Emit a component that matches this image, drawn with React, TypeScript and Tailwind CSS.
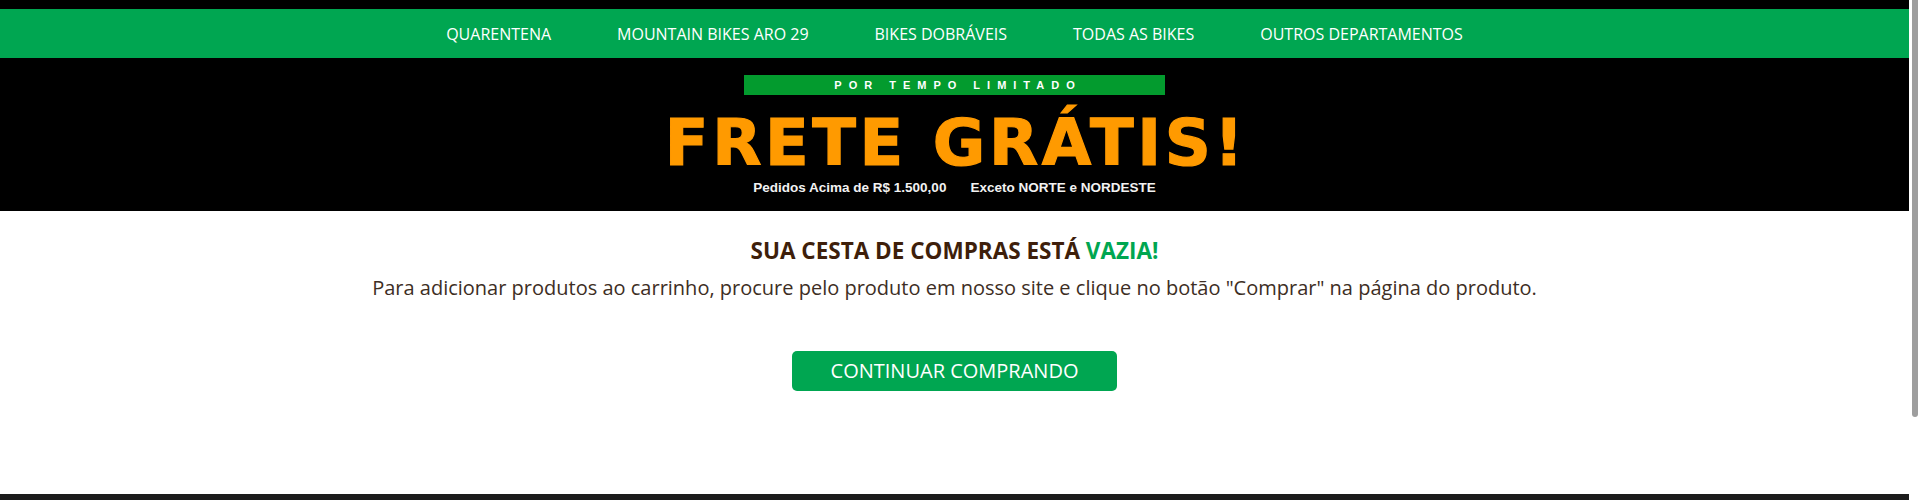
const navItems = [
  "Quarentena",
  "Mountain Bikes Aro 29",
  "Bikes Dobráveis",
  "Todas as Bikes",
  "Outros Departamentos",
];

function PromoBanner() {
  return (
    <section className="flex h-[153px] flex-col items-center bg-black">
      <div className="mt-[17px] flex h-[20px] w-[421px] items-center justify-center bg-[#039b2e]">
        <span className="pl-[7px] font-['Liberation_Sans',Arial,sans-serif] text-[11px] font-bold uppercase leading-none tracking-[7px] text-white">
          Por tempo limitado
        </span>
      </div>
      <h2 className="mt-[16px] pl-[3px] font-['DejaVu_Sans',sans-serif] text-[64px] font-bold uppercase leading-[64px] tracking-[3.6px] text-[#ff9a00] [-webkit-text-stroke:1.2px_#ff9a00]">
        Frete Grátis!
      </h2>
      <div className="mt-[5px] flex gap-[24px] font-['Liberation_Sans',Arial,sans-serif] text-[13.5px] font-bold leading-[16px] text-[#f2f2f2]">
        <span>Pedidos Acima de R$ 1.500,00</span>
        <span>Exceto NORTE e NORDESTE</span>
      </div>
    </section>
  );
}

export default function App() {
  return (
    <div className="flex h-[500px] w-full overflow-hidden bg-white font-['Open_Sans',sans-serif]">
      <div className="flex min-w-0 flex-1 flex-col">
        <div className="h-[9px] bg-black" />

        <nav className="flex h-[49px] items-center justify-center bg-[#00a651]">
          {navItems.map((item) => (
            <a
              key={item}
              href="#"
              className="px-[33px] text-[16px] uppercase leading-none text-white"
            >
              {item}
            </a>
          ))}
        </nav>

        <PromoBanner />

        <main className="flex flex-1 flex-col items-center">
          <h1 className="mt-[25px] text-[22.5px] font-bold uppercase leading-[30px] text-[#3e1f0b]">
            Sua cesta de compras está <span className="text-[#00a651]">vazia!</span>
          </h1>
          <p className="mt-[8px] text-[20px] leading-[28px] text-[#3d2e24]">
            Para adicionar produtos ao carrinho, procure pelo produto em nosso site e clique no botão "Comprar" na página do produto.
          </p>
          <a
            href="#"
            className="mt-[49px] flex h-[40px] w-[325px] items-center justify-center rounded-[5px] bg-[#00a651] text-[20px] uppercase leading-none text-white"
          >
            Continuar comprando
          </a>
        </main>

        <footer className="h-[6px] bg-[#1c1c1c]" />
      </div>

      {/* scrollbar */}
      <div className="w-[10px] bg-white pl-[3px] pr-[1px]">
        <div className="h-[417px] rounded-b-[3px] bg-[#9e9e9e]" />
      </div>
    </div>
  );
}
